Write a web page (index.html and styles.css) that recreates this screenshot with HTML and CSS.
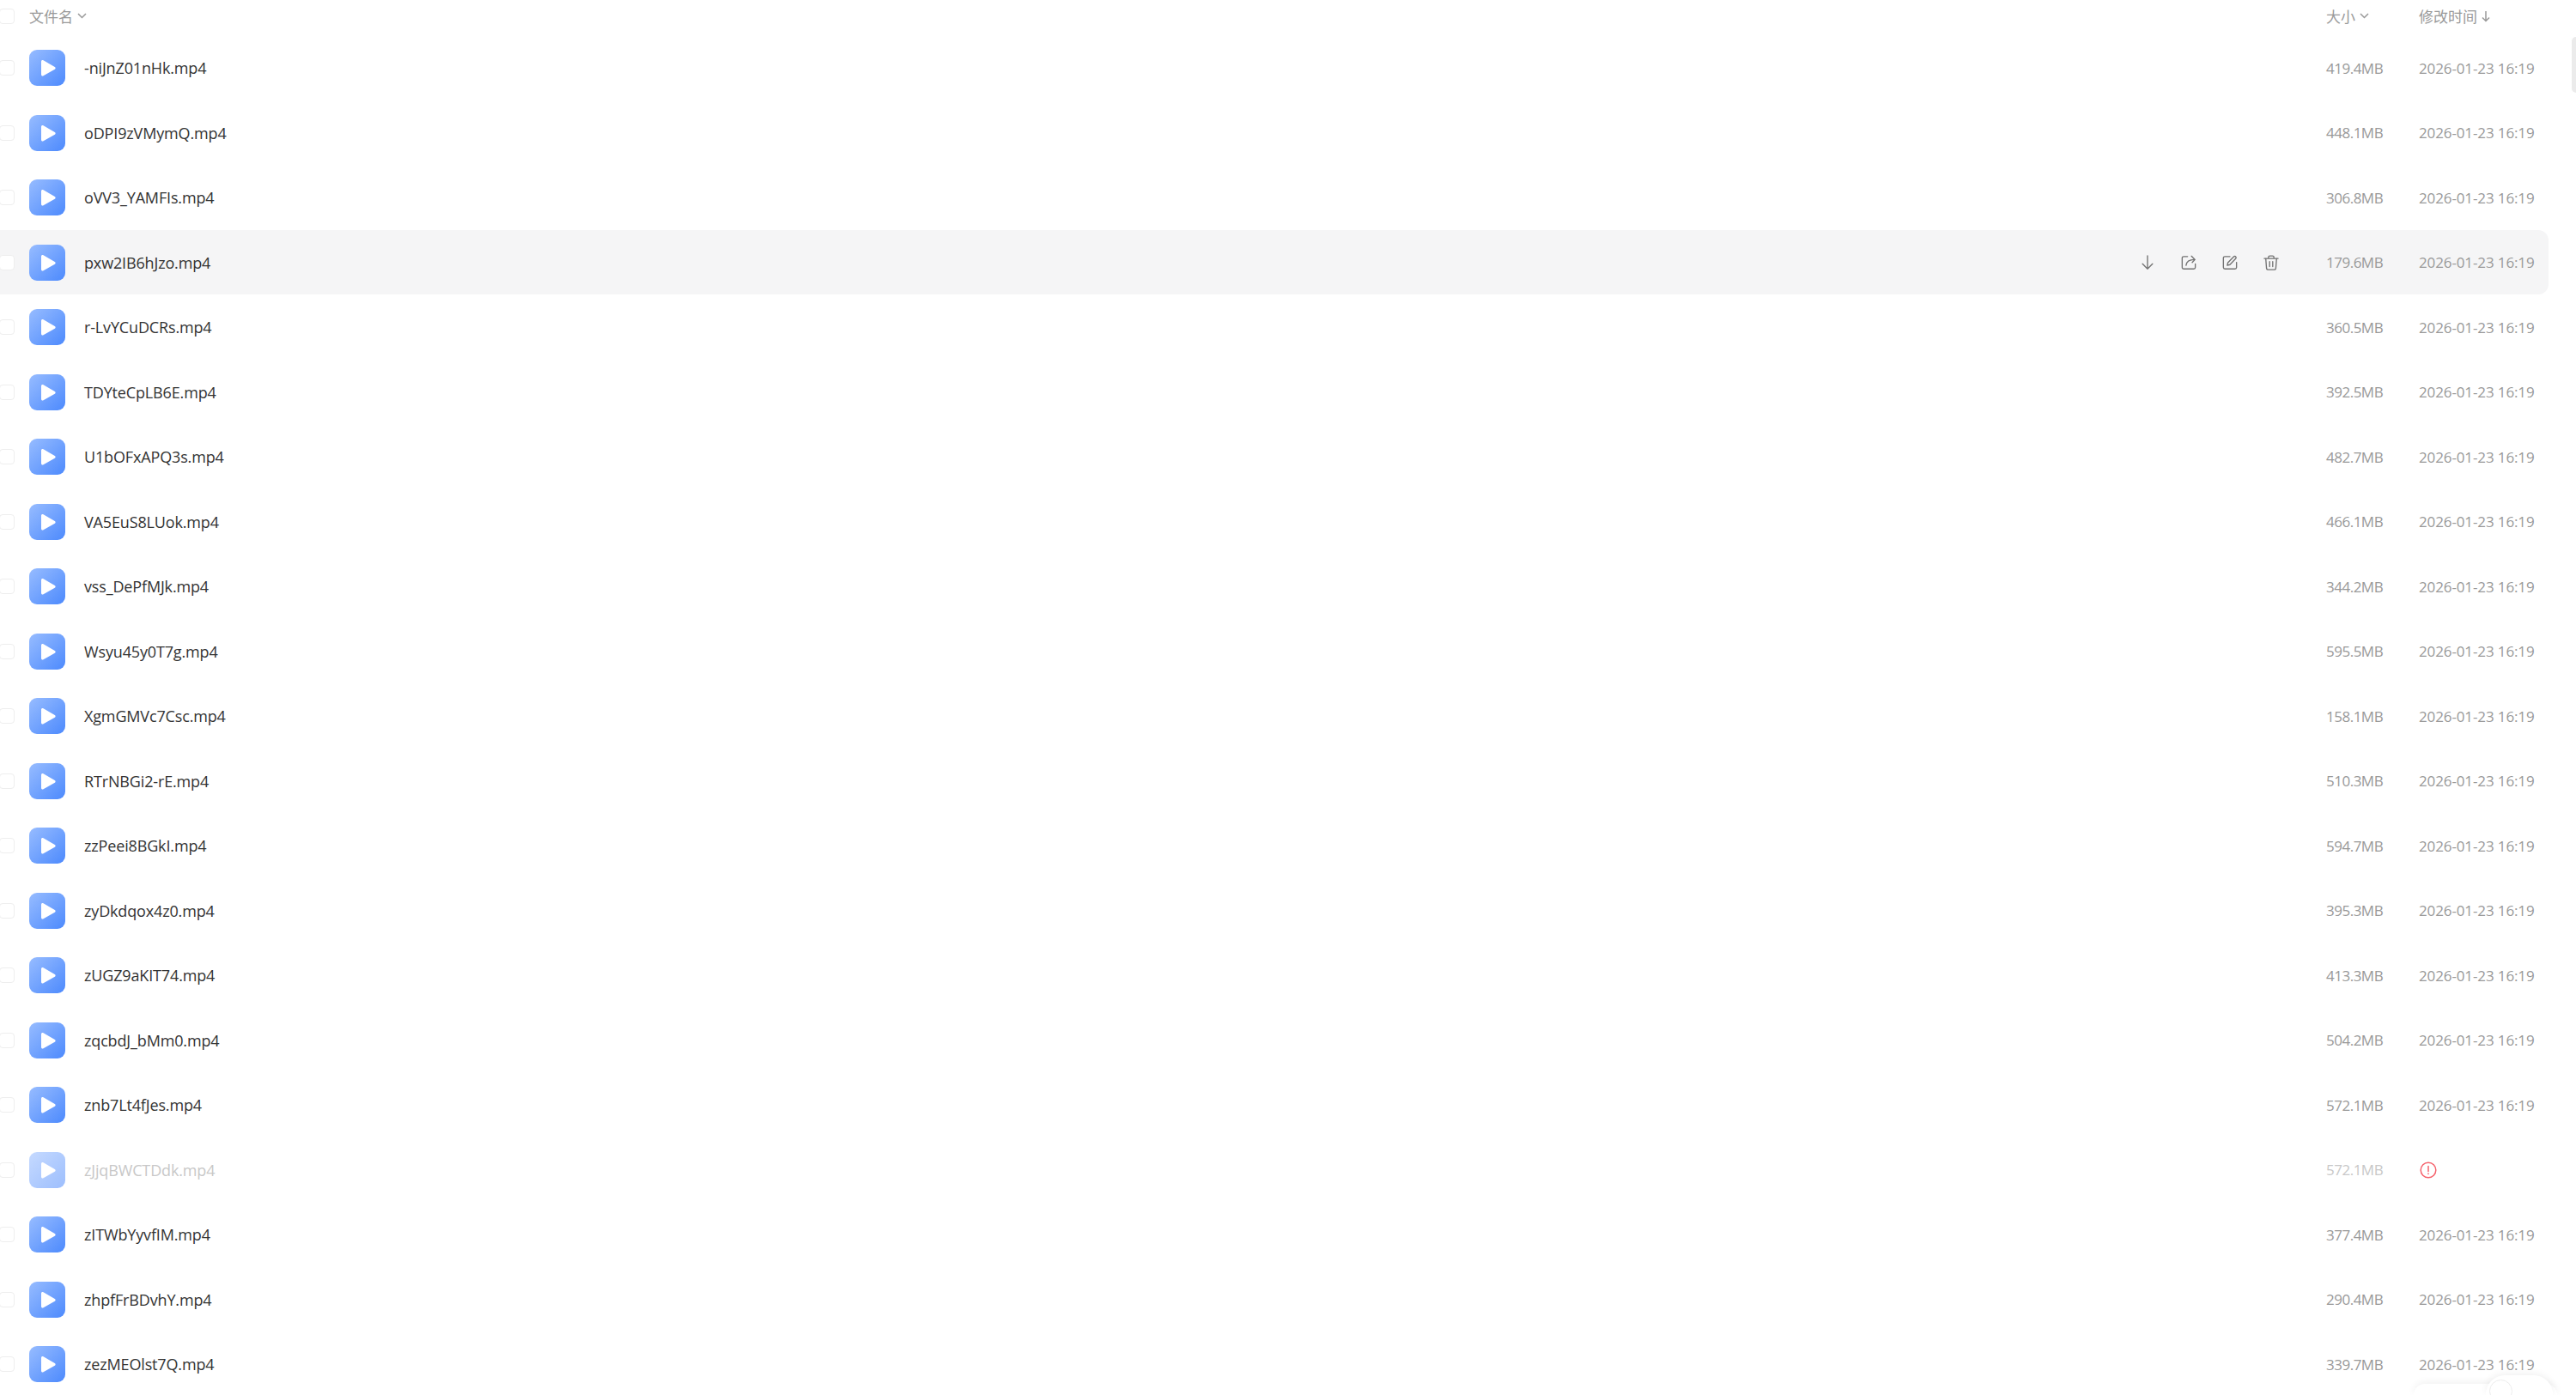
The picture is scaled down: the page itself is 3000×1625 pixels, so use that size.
FILE: index.html
```html
<!DOCTYPE html>
<html lang="zh-CN">
<head>
<meta charset="utf-8">
<title>文件列表</title>
<link rel="stylesheet" href="styles.css">
</head>
<body>
<svg class="defs" width="0" height="0" aria-hidden="true">
  <defs>
    <linearGradient id="tile" x1="0" y1="0" x2="1" y2="1">
      <stop offset="0" stop-color="#97bcff"/>
      <stop offset="1" stop-color="#4d8afd"/>
    </linearGradient>
    <symbol id="video" viewBox="0 0 42 42">
      <rect width="42" height="42" rx="9" fill="url(#tile)"/>
      <path d="M14 13.800v15c0 1.500 1.300 2.200 2.500 1.500l13.300-7.500c1.100-.6 1.100-2.200 0-2.800l-13.300-7.700c-1.200-.7-2.500 0-2.500 1.500z" fill="#fff"/>
    </symbol>
  </defs>
</svg>
<main class="list">
  <header class="head">
    <span class="check"></span>
    <div class="cell-name head-name">文件名<svg class="chev" viewBox="0 0 11 7"><path d="M1 1l4.500 4.500L10 1"/></svg></div>
    <div class="cell-size head-size">大小<svg class="chev" viewBox="0 0 11 7"><path d="M1 1l4.500 4.500L10 1"/></svg></div>
    <div class="cell-time head-time">修改时间<svg class="sort" viewBox="0 0 10 14"><path d="M5 1v11.500M1 8.500l4 4 4-4"/></svg></div>
  </header>
  <div class="row"><span class="check"></span><svg class="tile"><use href="#video"/></svg><div class="cell-name">-niJnZ01nHk.mp4</div><div class="cell-size">419.4MB</div><div class="cell-time">2026-01-23 16:19</div></div>
  <div class="row"><span class="check"></span><svg class="tile"><use href="#video"/></svg><div class="cell-name">oDPI9zVMymQ.mp4</div><div class="cell-size">448.1MB</div><div class="cell-time">2026-01-23 16:19</div></div>
  <div class="row"><span class="check"></span><svg class="tile"><use href="#video"/></svg><div class="cell-name">oVV3_YAMFIs.mp4</div><div class="cell-size">306.8MB</div><div class="cell-time">2026-01-23 16:19</div></div>
  <div class="row hover"><span class="check"></span><svg class="tile"><use href="#video"/></svg><div class="cell-name">pxw2IB6hJzo.mp4</div>
    <div class="actions">
      <svg class="act" viewBox="0 0 20 20"><path d="M10 1v17M3.500 11.500 10 18l6.500-6.500"/></svg>
      <svg class="act" viewBox="0 0 20 20"><path d="M8.500 2H3.500a2 2 0 0 0-2 2v12a2 2 0 0 0 2 2h13a2 2 0 0 0 2-2v-4.500"/><path d="M6.500 13.500C7 9 10.500 6 17.500 6"/><path d="M13.500 1.500 18 6l-3.500 3.800"/></svg>
      <svg class="act" viewBox="0 0 20 20"><path d="M10 2H3.500a2 2 0 0 0-2 2v12a2 2 0 0 0 2 2h13a2 2 0 0 0 2-2v-6.500"/><path d="M6.500 13.500l.8-3.500 7.600-7.800a1.700 1.700 0 0 1 2.500 0 1.700 1.700 0 0 1 0 2.500L10 12.500z"/></svg>
      <svg class="act" viewBox="0 0 20 20"><path d="M1 4.500h18M6.500 4.500V3A1.800 1.800 0 0 1 8.300 1.200h3.400A1.800 1.800 0 0 1 13.500 3v1.500M3 4.500l1 13a2 2 0 0 0 2 1.500h8a2 2 0 0 0 2-1.500l1-13M8 8.500v6.500M12 8.500v6.500"/></svg>
    </div>
    <div class="cell-size">179.6MB</div><div class="cell-time">2026-01-23 16:19</div></div>
  <div class="row"><span class="check"></span><svg class="tile"><use href="#video"/></svg><div class="cell-name">r-LvYCuDCRs.mp4</div><div class="cell-size">360.5MB</div><div class="cell-time">2026-01-23 16:19</div></div>
  <div class="row"><span class="check"></span><svg class="tile"><use href="#video"/></svg><div class="cell-name">TDYteCpLB6E.mp4</div><div class="cell-size">392.5MB</div><div class="cell-time">2026-01-23 16:19</div></div>
  <div class="row"><span class="check"></span><svg class="tile"><use href="#video"/></svg><div class="cell-name">U1bOFxAPQ3s.mp4</div><div class="cell-size">482.7MB</div><div class="cell-time">2026-01-23 16:19</div></div>
  <div class="row"><span class="check"></span><svg class="tile"><use href="#video"/></svg><div class="cell-name">VA5EuS8LUok.mp4</div><div class="cell-size">466.1MB</div><div class="cell-time">2026-01-23 16:19</div></div>
  <div class="row"><span class="check"></span><svg class="tile"><use href="#video"/></svg><div class="cell-name">vss_DePfMJk.mp4</div><div class="cell-size">344.2MB</div><div class="cell-time">2026-01-23 16:19</div></div>
  <div class="row"><span class="check"></span><svg class="tile"><use href="#video"/></svg><div class="cell-name">Wsyu45y0T7g.mp4</div><div class="cell-size">595.5MB</div><div class="cell-time">2026-01-23 16:19</div></div>
  <div class="row"><span class="check"></span><svg class="tile"><use href="#video"/></svg><div class="cell-name">XgmGMVc7Csc.mp4</div><div class="cell-size">158.1MB</div><div class="cell-time">2026-01-23 16:19</div></div>
  <div class="row"><span class="check"></span><svg class="tile"><use href="#video"/></svg><div class="cell-name">RTrNBGi2-rE.mp4</div><div class="cell-size">510.3MB</div><div class="cell-time">2026-01-23 16:19</div></div>
  <div class="row"><span class="check"></span><svg class="tile"><use href="#video"/></svg><div class="cell-name">zzPeei8BGkI.mp4</div><div class="cell-size">594.7MB</div><div class="cell-time">2026-01-23 16:19</div></div>
  <div class="row"><span class="check"></span><svg class="tile"><use href="#video"/></svg><div class="cell-name">zyDkdqox4z0.mp4</div><div class="cell-size">395.3MB</div><div class="cell-time">2026-01-23 16:19</div></div>
  <div class="row"><span class="check"></span><svg class="tile"><use href="#video"/></svg><div class="cell-name">zUGZ9aKIT74.mp4</div><div class="cell-size">413.3MB</div><div class="cell-time">2026-01-23 16:19</div></div>
  <div class="row"><span class="check"></span><svg class="tile"><use href="#video"/></svg><div class="cell-name">zqcbdJ_bMm0.mp4</div><div class="cell-size">504.2MB</div><div class="cell-time">2026-01-23 16:19</div></div>
  <div class="row"><span class="check"></span><svg class="tile"><use href="#video"/></svg><div class="cell-name">znb7Lt4fJes.mp4</div><div class="cell-size">572.1MB</div><div class="cell-time">2026-01-23 16:19</div></div>
  <div class="row failed"><span class="check"></span><svg class="tile"><use href="#video"/></svg><div class="cell-name">zJjqBWCTDdk.mp4</div><div class="cell-size">572.1MB</div><div class="cell-time"><svg class="warn" viewBox="0 0 20 20"><circle cx="10" cy="10" r="8.800"/><path d="M10 5.500v6M10 14v.6"/></svg></div></div>
  <div class="row"><span class="check"></span><svg class="tile"><use href="#video"/></svg><div class="cell-name">zITWbYyvfIM.mp4</div><div class="cell-size">377.4MB</div><div class="cell-time">2026-01-23 16:19</div></div>
  <div class="row"><span class="check"></span><svg class="tile"><use href="#video"/></svg><div class="cell-name">zhpfFrBDvhY.mp4</div><div class="cell-size">290.4MB</div><div class="cell-time">2026-01-23 16:19</div></div>
  <div class="row"><span class="check"></span><svg class="tile"><use href="#video"/></svg><div class="cell-name">zezMEOlst7Q.mp4</div><div class="cell-size">339.7MB</div><div class="cell-time">2026-01-23 16:19</div></div>
</main>
<div class="scroll-thumb"></div>
<div class="dock-card"></div>
<div class="dock-tab"><span class="dock-ring"></span></div>
</body>
</html>
```
FILE: styles.css
```css
* { box-sizing: border-box; }
html, body { margin: 0; height: 100%; overflow: hidden; background: #fff; }
body {
  font-family: "Open Sans", "Noto Sans CJK SC", sans-serif;
  font-size: 18px;
  color: #333;
}
.defs { position: absolute; }
.list { width: 2969px; margin-left: -1px; }
.head {
  display: flex;
  align-items: center;
  height: 37px;
  margin-bottom: 4.250px;
  color: #999;
}
.head .check { margin-right: 17px; }
.head-name, .head-size, .head-time { display: flex; align-items: center; }
.head-name { flex: 1; font-size: 17px; }
.cell-size { width: 108px; flex: none; color: #999; font-size: 17px; letter-spacing: -.5px; }
.cell-time { width: 151px; flex: none; color: #999; font-size: 17px; letter-spacing: -.12px; }
.head-size, .head-time { letter-spacing: 0; }
.chev { width: 11px; height: 7px; margin-left: 5px; fill: none; stroke: #999; stroke-width: 1.500; }
.sort { width: 10px; height: 14px; margin-left: 5px; fill: none; stroke: #999; stroke-width: 1.500; }
.row {
  display: flex;
  align-items: center;
  height: 75.500px;
  border-radius: 0 12px 12px 0;
}
.row.hover { background: #f5f5f6; }
.check {
  flex: none;
  width: 18px;
  height: 18px;
  border: 1px solid #eeeeee;
  border-radius: 4px;
  background: #fff;
}
.tile { flex: none; width: 42px; height: 42px; margin-left: 17px; }
.row .cell-name { flex: 1; margin-left: 22px; font-size: 18px; letter-spacing: -.15px; }
.actions { display: flex; gap: 30px; margin-right: 55px; }
.act { width: 18px; height: 18px; fill: none; stroke: #727272; stroke-width: 1.500; stroke-linecap: round; stroke-linejoin: round; }
.row.failed .cell-name, .row.failed .cell-size { color: #c8c8c8; }
.row.failed .tile { opacity: .55; }
.warn { display: block; width: 20px; height: 20px; margin-left: 1px; fill: none; stroke: #f5616b; stroke-width: 1.500; stroke-linecap: round; }
.scroll-thumb {
  position: absolute;
  left: 2995px;
  top: 43px;
  width: 5px;
  height: 65px;
  border-radius: 5px 0 0 5px;
  background: #ebebeb;
}
.dock-tab {
  position: absolute;
  left: 2895px;
  top: 1602px;
  width: 78px;
  height: 23px;
  overflow: hidden;
  border-radius: 22px 22px 0 0;
  background: #fff;
  box-shadow: 0 -2px 8px rgba(0, 0, 0, .06);
}
.dock-ring {
  position: absolute;
  left: 4px;
  top: 5px;
  width: 27px;
  height: 27px;
  border: 1px solid #ececec;
  border-radius: 50%;
}
.dock-card {
  position: absolute;
  left: 2811px;
  top: 1612px;
  width: 167px;
  height: 13px;
  border-radius: 14px 14px 0 0;
  background: #fff;
  box-shadow: 0 -2px 8px rgba(0, 0, 0, .06);
}
```
